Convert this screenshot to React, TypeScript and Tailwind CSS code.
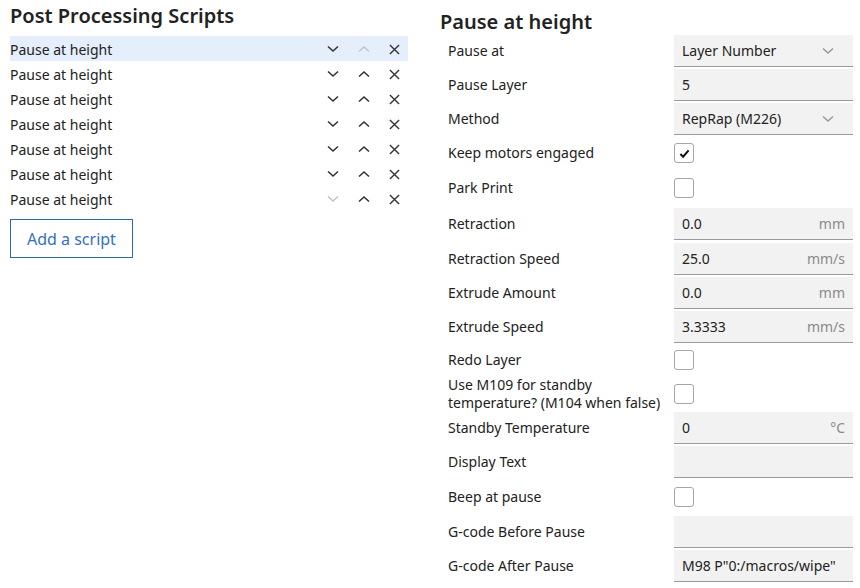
import React from "react";

const font = { fontFamily: '"Noto Sans", "Open Sans", sans-serif' };

function ChevronDown({ className = "" }: { className?: string }) {
  return (
    <svg viewBox="0 0 12 8" className={className} fill="none" stroke="currentColor" strokeWidth={1.6}>
      <path d="M1 1.5 L6 6 L11 1.5" />
    </svg>
  );
}

function ChevronUp({ className = "" }: { className?: string }) {
  return (
    <svg viewBox="0 0 12 8" className={className} fill="none" stroke="currentColor" strokeWidth={1.6}>
      <path d="M1 6.5 L6 2 L11 6.5" />
    </svg>
  );
}

function Cross({ className = "" }: { className?: string }) {
  return (
    <svg viewBox="0 0 12 12" className={className} fill="none" stroke="currentColor" strokeWidth={1.5}>
      <path d="M1 1 L11 11 M11 1 L1 11" />
    </svg>
  );
}

type Field =
  | { label: string; h: string; kind: "select"; value: string }
  | { label: string; h: string; kind: "input"; value: string; unit?: string }
  | { label: string; h: string; kind: "check"; checked?: boolean };

const fields: Field[] = [
  { label: "Pause at", h: "h-[34px]", kind: "select", value: "Layer Number" },
  { label: "Pause Layer", h: "h-[34px]", kind: "input", value: "5" },
  { label: "Method", h: "h-[34px]", kind: "select", value: "RepRap (M226)" },
  { label: "Keep motors engaged", h: "h-[34px]", kind: "check", checked: true },
  { label: "Park Print", h: "h-[36px]", kind: "check" },
  { label: "Retraction", h: "h-[36px]", kind: "input", value: "0.0", unit: "mm" },
  { label: "Retraction Speed", h: "h-[34px]", kind: "input", value: "25.0", unit: "mm/s" },
  { label: "Extrude Amount", h: "h-[34px]", kind: "input", value: "0.0", unit: "mm" },
  { label: "Extrude Speed", h: "h-[33px]", kind: "input", value: "3.3333", unit: "mm/s" },
  { label: "Redo Layer", h: "h-[34px]", kind: "check" },
  { label: "Use M109 for standby temperature? (M104 when false)", h: "h-[34px]", kind: "check" },
  { label: "Standby Temperature", h: "h-[33px]", kind: "input", value: "0", unit: "°C" },
  { label: "Display Text", h: "h-[35px]", kind: "input", value: "" },
  { label: "Beep at pause", h: "h-[36px]", kind: "check" },
  { label: "G-code Before Pause", h: "h-[34px]", kind: "input", value: "" },
  { label: "G-code After Pause", h: "h-[33px]", kind: "input", value: 'M98 P"0:/macros/wipe"' },
];

function Control({ f }: { f: Field }) {
  if (f.kind === "check") {
    return (
      <div className="w-5 h-5 rounded-[3px] border border-[#a6a6a6] bg-white flex items-center justify-center">
        {f.checked && (
          <svg viewBox="0 0 12 12" className="w-[11px] h-[11px]">
            <path d="M1.5 6.5 L4.5 9.5 L10.5 2.5" fill="none" stroke="#111" strokeWidth={2.2} />
          </svg>
        )}
      </div>
    );
  }
  return (
    <div className="w-[179px] h-[32px] bg-[#f2f2f2] border-b border-[#9a9a9a] flex items-center justify-between pl-2 pr-2 text-[14px] text-[#222]">
      <span>{f.value}</span>
      {f.kind === "select" && <ChevronDown className="w-3 h-2 mr-[11px] text-[#9a9a9a]" />}
      {f.kind === "input" && f.unit && <span className="text-[#8a8a8a]">{f.unit}</span>}
    </div>
  );
}

export default function App() {
  return (
    <div className="w-[860px] h-[588px] bg-white flex text-[#222]" style={font}>
      <div className="w-[430px] pl-[10px] pr-[22px]">
        <h1 className="text-[20px] font-semibold leading-[28px] mt-[2px]">Post Processing Scripts</h1>
        <div className="mt-[6px]">
          {Array.from({ length: 7 }).map((_, i) => (
            <div
              key={i}
              className={`h-[25px] flex items-center text-[14px] pt-[1px] ${i === 0 ? "bg-[#e5eefb]" : ""}`}
            >
              <span className="flex-1">Pause at height</span>
              <div className="flex items-center gap-[19px] pr-[8px] text-[#333]">
                <ChevronDown className={`w-3 h-2 ${i === 6 ? "text-[#c4c4c4]" : ""}`} />
                <ChevronUp className={`w-3 h-2 ${i === 0 ? "text-[#c4c4c4]" : ""}`} />
                <Cross className="w-[11px] h-[11px]" />
              </div>
            </div>
          ))}
        </div>
        <button className="mt-[8px] h-[39px] px-4 border border-[#2d6aa3] text-[#3370c4] text-[16px] bg-white">
          Add a script
        </button>
      </div>
      <div className="flex-1 pl-[10px]">
        <h2 className="text-[20px] font-semibold leading-[28px] mt-[8px]">Pause at height</h2>
        <div className="mt-[-2px]">
          {fields.map((f) => (
            <div key={f.label} className={`${f.h} flex items-center`}>
              <div className="w-[234px] shrink-0 pl-[8px] pr-[6px] text-[14px] leading-[18px]">{f.label}</div>
              <Control f={f} />
            </div>
          ))}
        </div>
      </div>
    </div>
  );
}
